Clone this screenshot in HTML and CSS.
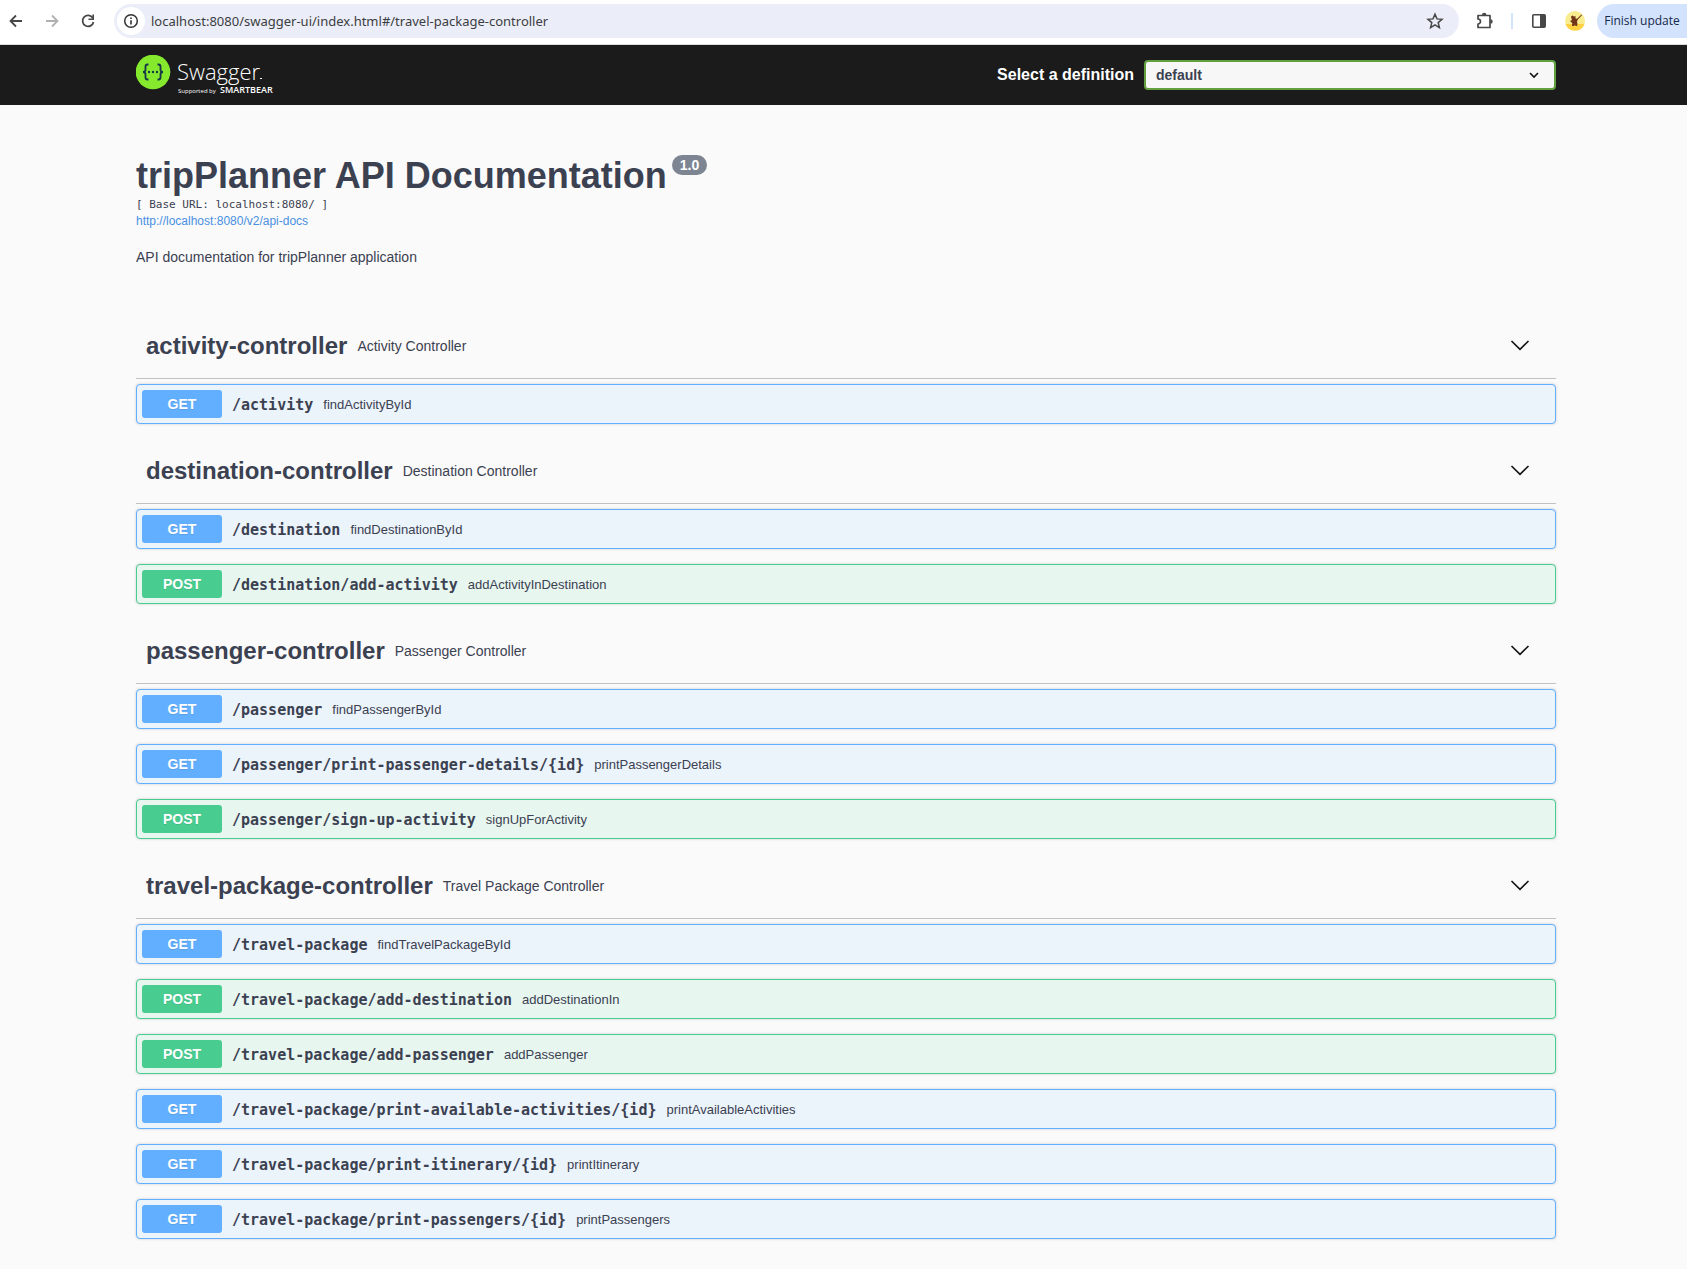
FILE: index.html
```html
<!DOCTYPE html>
<html lang="en">
<head>
<meta charset="utf-8">
<title>Swagger UI</title>
<link rel="stylesheet" href="styles.css">
</head>
<body>
<svg class="defs" aria-hidden="true">
  <symbol id="chevron" viewBox="0 0 20 20"><path d="M1.5 5l8.5 8.3L18.500 5" fill="none" stroke="#111" stroke-width="1.6"/></symbol>
</svg>

<nav class="browser" aria-label="Browser toolbar">
  <div class="nav-buttons">
    <button class="icon" aria-label="Back"><svg width="16" height="16" viewBox="0 0 16 16"><path d="M14 8H3M8 2.500L2.500 8L8 13.500" fill="none" stroke="#474747" stroke-width="1.800"/></svg></button>
    <button class="icon" aria-label="Forward" disabled><svg width="16" height="16" viewBox="0 0 16 16"><path d="M2 8h11M8 2.500L13.500 8L8 13.500" fill="none" stroke="#b0b0b0" stroke-width="1.800"/></svg></button>
    <button class="icon" aria-label="Reload"><svg width="16" height="16" viewBox="0 0 16 16"><path d="M12.800 5A5.500 5.500 0 1 0 13.500 9" fill="none" stroke="#474747" stroke-width="1.800"/><path d="M14 1.500V7H8.500V5.400H12.400V1.500z" fill="#474747"/></svg></button>
  </div>
  <div class="address">
    <button class="site-info" aria-label="Site information"><svg width="16" height="16" viewBox="0 0 16 16"><circle cx="8" cy="8" r="6.300" fill="none" stroke="#333" stroke-width="1.500"/><path d="M8 7.200v4.200M8 4.500v1.600" stroke="#333" stroke-width="1.600"/></svg></button>
    <input class="url" type="text" aria-label="Address" value="localhost:8080/swagger-ui/index.html#/travel-package-controller">
    <button class="icon" aria-label="Bookmark"><svg width="18" height="18" viewBox="0 0 18 18"><path d="M9 2.200l2 4.700 5 .400-3.800 3.300 1.200 5L9 12.900l-4.400 2.700 1.200-5L2 7.300l5-.400z" fill="none" stroke="#474747" stroke-width="1.500"/></svg></button>
  </div>
  <div class="tools">
    <button class="icon" aria-label="Extensions"><svg width="18" height="18" viewBox="0 0 18 18"><path d="M2 3.500H14V15.500H2V12A2.400 2.400 0 0 0 2 7z" fill="none" stroke="#474747" stroke-width="1.700" stroke-linejoin="round"/><path d="M6 3a2.200 2.200 0 0 1 4.400 0zM14.500 7.300a2.200 2.200 0 0 1 0 4.400z" fill="#474747"/></svg></button>
    <span class="divider"></span>
    <button class="icon" aria-label="Side panel"><svg width="18" height="18" viewBox="0 0 18 18"><rect x="2.800" y="2.800" width="12.400" height="12.400" rx="1" fill="none" stroke="#474747" stroke-width="1.600"/><path d="M10 3h5v12h-5z" fill="#474747"/></svg></button>
    <button class="icon" aria-label="Profile"><svg width="20" height="20" viewBox="0 0 20 20"><circle cx="10" cy="10" r="10" fill="#f9ec8e"/><path d="M.600 13H19.400A10 10 0 0 1 .600 13z" fill="#ffd042"/><path d="M6 5.500l1.500-1L9 5.500l1.500-.500v2.500l1.500.300 4.500-4.300.6.600-4.600 4.900-.500 2 .500 2-.500 2H10.500l-.500-1.500-.800 1.500H7l.300-3-1.800-1.300.300-1.700 1.200.500z" fill="#713619"/></svg></button>
  </div>
  <button class="update">Finish update</button>
</nav>

<header class="topbar">
  <a class="logo" href="#" aria-label="Swagger, supported by SmartBear">
    <svg width="142" height="40" viewBox="0 0 142 40">
      <circle cx="17" cy="17" r="17.300" fill="#85ea2d"/>
      <path d="M12.500 9.500h-1q-2 0-2 2v3q0 2.500-2.500 2.500 2.500 0 2.500 2.500v3q0 2 2 2h1M21.500 9.500h1q2 0 2 2v3q0 2.500 2.500 2.500-2.500 0-2.500 2.500v3q0 2-2 2h-1" fill="none" stroke="#173647" stroke-width="1.800"/>
      <g fill="#173647"><circle cx="13" cy="17" r="1.200"/><circle cx="17" cy="17" r="1.200"/><circle cx="21" cy="17" r="1.200"/></g>
      <text class="logo-name" x="41" y="25">Swagger</text>
      <path d="M124 23.500h2" stroke="#fff" stroke-width="1"/>
      <text class="logo-by" x="42" y="38">Supported by</text>
      <text class="logo-brand" x="84" y="38">SMARTBEAR</text>
    </svg>
  </a>
  <form class="definition">
    <label for="definition">Select a definition</label>
    <div class="select-wrap">
      <select id="definition"><option>default</option></select>
      <svg class="select-arrow" width="16" height="16" viewBox="0 0 20 20"><path d="M5 7.500l5 5 5-5" fill="none" stroke="#111" stroke-width="2"/></svg>
    </div>
  </form>
</header>

<main class="content">
  <section class="info">
    <h1>tripPlanner API Documentation <span class="version">1.0</span></h1>
    <p class="base-url">[ Base URL: localhost:8080/ ]</p>
    <a class="docs-link" href="#">http://localhost:8080/v2/api-docs</a>
    <p class="description">API documentation for tripPlanner application</p>
  </section>

  <section class="tag">
    <header><h2>activity-controller</h2><p>Activity Controller</p><button class="toggle" aria-label="Collapse activity-controller"><svg width="20" height="20"><use href="#chevron"/></svg></button></header>
    <button class="op get"><span class="method">GET</span><span class="path">/activity</span><span class="summary">findActivityById</span></button>
  </section>

  <section class="tag">
    <header><h2>destination-controller</h2><p>Destination Controller</p><button class="toggle" aria-label="Collapse destination-controller"><svg width="20" height="20"><use href="#chevron"/></svg></button></header>
    <button class="op get"><span class="method">GET</span><span class="path">/destination</span><span class="summary">findDestinationById</span></button>
    <button class="op post"><span class="method">POST</span><span class="path">/destination/add-activity</span><span class="summary">addActivityInDestination</span></button>
  </section>

  <section class="tag">
    <header><h2>passenger-controller</h2><p>Passenger Controller</p><button class="toggle" aria-label="Collapse passenger-controller"><svg width="20" height="20"><use href="#chevron"/></svg></button></header>
    <button class="op get"><span class="method">GET</span><span class="path">/passenger</span><span class="summary">findPassengerById</span></button>
    <button class="op get"><span class="method">GET</span><span class="path">/passenger/print-passenger-details/{id}</span><span class="summary">printPassengerDetails</span></button>
    <button class="op post"><span class="method">POST</span><span class="path">/passenger/sign-up-activity</span><span class="summary">signUpForActivity</span></button>
  </section>

  <section class="tag">
    <header><h2>travel-package-controller</h2><p>Travel Package Controller</p><button class="toggle" aria-label="Collapse travel-package-controller"><svg width="20" height="20"><use href="#chevron"/></svg></button></header>
    <button class="op get"><span class="method">GET</span><span class="path">/travel-package</span><span class="summary">findTravelPackageById</span></button>
    <button class="op post"><span class="method">POST</span><span class="path">/travel-package/add-destination</span><span class="summary">addDestinationIn</span></button>
    <button class="op post"><span class="method">POST</span><span class="path">/travel-package/add-passenger</span><span class="summary">addPassenger</span></button>
    <button class="op get"><span class="method">GET</span><span class="path">/travel-package/print-available-activities/{id}</span><span class="summary">printAvailableActivities</span></button>
    <button class="op get"><span class="method">GET</span><span class="path">/travel-package/print-itinerary/{id}</span><span class="summary">printItinerary</span></button>
    <button class="op get"><span class="method">GET</span><span class="path">/travel-package/print-passengers/{id}</span><span class="summary">printPassengers</span></button>
  </section>
</main>
</body>
</html>
```
FILE: styles.css
```css
* { box-sizing: border-box; }

body {
  margin: 0;
  background: #fafafa;
  color: #3b4151;
  font-family: "Liberation Sans", Arial, sans-serif;
}

h1, h2, p { margin: 0; }

button {
  margin: 0;
  padding: 0;
  border: 0;
  background: none;
  color: inherit;
  font: inherit;
}

svg { display: block; }

.defs { display: none; }

/* Browser toolbar */
.browser {
  display: flex;
  align-items: center;
  height: 45px;
  padding: 0 0 3px 8px;
  overflow: hidden;
  border-bottom: 1px solid #dcdce0;
  background: #fff;
}

.nav-buttons {
  display: flex;
  gap: 20px;
  margin-right: 18px;
}

.address {
  display: flex;
  flex: 1;
  align-items: center;
  height: 34px;
  padding: 0 15px 0 3px;
  border-radius: 17px;
  background: #ebeef8;
}

.site-info {
  display: grid;
  place-items: center;
  width: 28px;
  height: 28px;
  border-radius: 50%;
  background: #fff;
}

.url {
  flex: 1;
  min-width: 0;
  padding: 0 6px;
  border: 0;
  background: none;
  color: #3c3d42;
  font: 13px "Noto Sans", sans-serif;
}

.tools {
  display: flex;
  align-items: center;
  margin: 0 12px 0 17px;
}

.divider {
  width: 2px;
  height: 16px;
  margin: 0 17px;
  background: #d3e3fd;
}

.tools .divider + .icon { margin-right: 17px; }

.update {
  width: 90px;
  height: 34px;
  border-radius: 17px 0 0 17px;
  background: #d3e3fd;
  color: #13284b;
  font: 12px "Open Sans", sans-serif;
  white-space: nowrap;
}

/* Swagger top bar */
.topbar {
  display: flex;
  align-items: center;
  justify-content: space-between;
  height: 60px;
  padding: 0 131px 0 136px;
  background: #1b1b1b;
}

.logo-name { fill: #fff; font: 300 22px "Open Sans", sans-serif; }
.logo-by { fill: #fff; font: 400 6px "Open Sans", sans-serif; }
.logo-brand { fill: #fff; font: 600 9px "Open Sans", sans-serif; }

.definition {
  display: flex;
  align-items: center;
  gap: 10px;
  color: #fff;
  font-size: 16px;
  font-weight: 700;
}

.select-wrap { position: relative; }

.select-wrap select {
  display: block;
  width: 412px;
  height: 30px;
  padding: 0 40px 0 10px;
  border: 2px solid #62a03f;
  border-radius: 4px;
  appearance: none;
  background: #f7f7f7;
  color: #3b4151;
  font: 700 14px "Liberation Sans", Arial, sans-serif;
}

.select-arrow {
  position: absolute;
  top: 7px;
  right: 14px;
  pointer-events: none;
}

/* Documentation */
.content { padding: 50px 131px 14px 136px; }

.info { padding-bottom: 48px; }

h1 {
  display: flex;
  align-items: flex-start;
  gap: 5px;
  font-size: 36px;
  line-height: 41px;
}

.version {
  padding: 0 8px;
  border-radius: 10px;
  background: #7d8492;
  color: #fff;
  font-size: 14px;
  line-height: 20px;
}

.base-url {
  padding-top: 1px;
  font: 11px/16px "DejaVu Sans Mono", monospace;
}

.docs-link {
  display: block;
  color: #4990e2;
  font-size: 12px;
  line-height: 16px;
  text-decoration: none;
}

.description {
  margin-top: 19px;
  font-size: 14px;
  line-height: 18px;
}

.tag header {
  display: flex;
  align-items: center;
  gap: 10px;
  height: 65px;
  margin-bottom: 5px;
  padding: 0 26px 0 10px;
  border-bottom: 1px solid rgba(59, 65, 81, .3);
}

.tag h2 { font-size: 24px; }

.tag header p { font-size: 14px; }

.toggle { margin-left: auto; }

.op {
  display: flex;
  align-items: center;
  gap: 10px;
  width: 100%;
  height: 40px;
  margin-bottom: 15px;
  padding: 5px;
  border: 1px solid;
  border-radius: 4px;
  box-shadow: 0 0 3px rgba(0, 0, 0, .19);
  text-align: left;
}

.get { border-color: #61affe; background: #ebf3fb; }
.post { border-color: #49cc90; background: #e8f6f0; }

.method {
  width: 80px;
  border-radius: 3px;
  color: #fff;
  font-size: 14px;
  font-weight: 700;
  line-height: 28px;
  text-align: center;
  text-shadow: 0 1px 0 rgba(0, 0, 0, .1);
}

.get .method { background: #61affe; }
.post .method { background: #49cc90; }

.path {
  padding-top: 2px;
  font: 700 15px "DejaVu Sans Mono", monospace;
}

.summary { font-size: 13px; }
```
